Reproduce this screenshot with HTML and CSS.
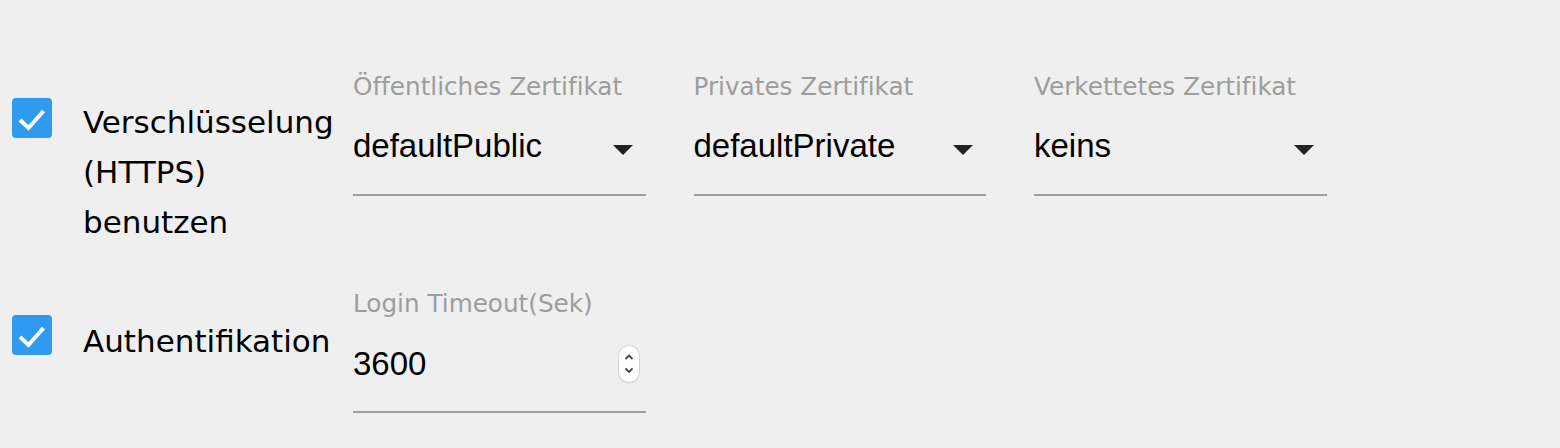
FILE: index.html
```html
<!DOCTYPE html>
<html lang="de">
<head>
<meta charset="utf-8">
<title>Einstellungen</title>
<link rel="stylesheet" href="styles.css">
</head>
<body>
<main class="settings">
  <section class="row">
    <span class="checkbox" role="checkbox" aria-checked="true">
      <svg viewBox="0 0 40 40" width="40" height="40"><path d="M8 22 L16.5 30 L31.5 13" fill="none" stroke="#fff" stroke-width="4"/></svg>
    </span>
    <span class="row-label">Verschlüsselung (HTTPS) benutzen</span>
    <div class="fields">
      <div class="field">
        <div class="field-label">Öffentliches Zertifikat</div>
        <div class="field-input">
          <span class="value">defaultPublic</span>
          <svg class="arrow" viewBox="0 0 20 10" width="20" height="10"><path d="M0 0 H20 L10 10 Z" fill="#222"/></svg>
        </div>
      </div>
      <div class="field">
        <div class="field-label">Privates Zertifikat</div>
        <div class="field-input">
          <span class="value">defaultPrivate</span>
          <svg class="arrow" viewBox="0 0 20 10" width="20" height="10"><path d="M0 0 H20 L10 10 Z" fill="#222"/></svg>
        </div>
      </div>
      <div class="field">
        <div class="field-label">Verkettetes Zertifikat</div>
        <div class="field-input">
          <span class="value">keins</span>
          <svg class="arrow" viewBox="0 0 20 10" width="20" height="10"><path d="M0 0 H20 L10 10 Z" fill="#222"/></svg>
        </div>
      </div>
    </div>
  </section>
  <section class="row row-second">
    <span class="checkbox" role="checkbox" aria-checked="true">
      <svg viewBox="0 0 40 40" width="40" height="40"><path d="M8 22 L16.5 30 L31.5 13" fill="none" stroke="#fff" stroke-width="4"/></svg>
    </span>
    <span class="row-label row-label-single">Authentifikation</span>
    <div class="fields">
      <div class="field">
        <div class="field-label">Login Timeout(Sek)</div>
        <div class="field-input field-input-number">
          <span class="value">3600</span>
          <span class="spinner">
            <svg viewBox="0 0 20 36" width="20" height="36"><path d="M6.5 13 L10 9.5 L13.5 13" fill="none" stroke="#444" stroke-width="1.8"/><path d="M6.5 22.5 L10 26 L13.5 22.5" fill="none" stroke="#444" stroke-width="1.8"/></svg>
          </span>
        </div>
      </div>
    </div>
  </section>
</main>
</body>
</html>
```
FILE: styles.css
```css
html, body {
  margin: 0;
  padding: 0;
  background: #efefef;
}

.settings {
  padding-top: 72px;
}

.row {
  display: flex;
  align-items: flex-start;
}

.row-second {
  margin-top: 42px;
}

.checkbox {
  flex: 0 0 40px;
  width: 40px;
  height: 40px;
  margin: 26px 0 0 12px;
  background: #2e9bf0;
  border-radius: 4px;
  display: block;
}

.checkbox svg {
  display: block;
}

.row-label {
  flex: 0 0 270px;
  margin: 25px 0 0 31px;
  font-family: "DejaVu Sans", sans-serif;
  font-size: 31px;
  line-height: 50px;
  color: #000;
}

.row-label-single {
  margin-top: 27px;
}

.fields {
  display: flex;
  gap: 48px;
}

.field {
  width: 292.5px;
}

.field-label {
  font-family: "DejaVu Sans", sans-serif;
  font-size: 24.7px;
  line-height: 30px;
  color: #9d9d9d;
  white-space: nowrap;
  font-variant-ligatures: none;
}

.field-input {
  margin-top: 24px;
  height: 40px;
  padding-bottom: 28px;
  border-bottom: 2px solid #9f9f9f;
  display: flex;
  align-items: center;
  justify-content: space-between;
}

.field-input-number {
  margin-top: 25px;
  padding-bottom: 27px;
}

.value {
  font-family: "Liberation Sans", Arial, sans-serif;
  font-size: 33px;
  line-height: 40px;
  color: #000;
}

.arrow {
  display: block;
  margin: 8px 13px 0 0;
}

.spinner {
  display: block;
  width: 20px;
  height: 36px;
  margin-right: 7px;
  background: #fff;
  border-radius: 10px;
  box-shadow: 0 0 0 1px #d6d6d6, 0 1px 2px rgba(0, 0, 0, 0.15);
}

.spinner svg {
  display: block;
}
```
